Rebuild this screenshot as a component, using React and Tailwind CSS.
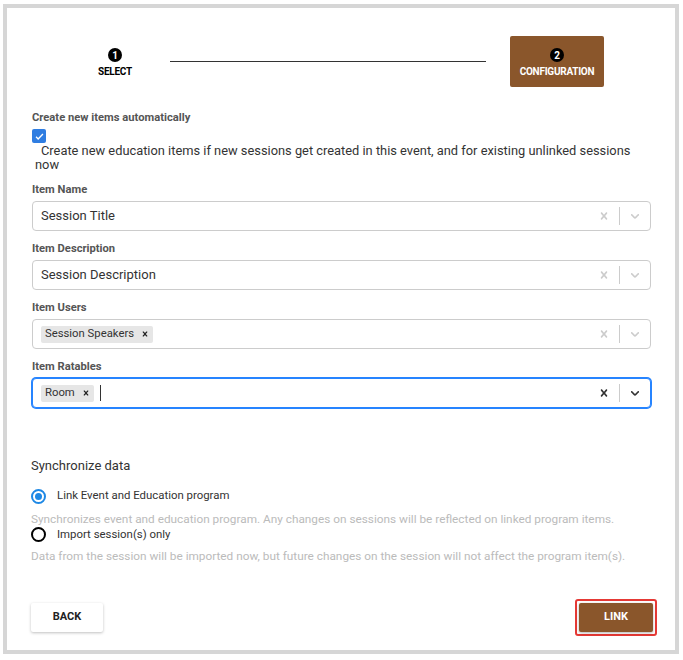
import React, { useState } from "react";

const font = { fontFamily: "Roboto, 'Liberation Sans', sans-serif" };

function ClearIcon({ dark }) {
  return (
    <svg width="14" height="14" viewBox="0 0 20 20" className={dark ? "fill-[#333]" : "fill-[#ccc]"}>
      <path d="M14.348 14.849c-0.469 0.469-1.229 0.469-1.697 0l-2.651-3.030-2.651 3.029c-0.469 0.469-1.229 0.469-1.697 0-0.469-0.469-0.469-1.229 0-1.697l2.758-3.15-2.759-3.152c-0.469-0.469-0.469-1.228 0-1.697s1.228-0.469 1.697 0l2.652 3.031 2.651-3.031c0.469-0.469 1.228-0.469 1.697 0s0.469 1.229 0 1.697l-2.758 3.152 2.758 3.15c0.469 0.469 0.469 1.229 0 1.698z" />
    </svg>
  );
}

function ChevronIcon({ dark }) {
  return (
    <svg width="14" height="14" viewBox="0 0 20 20" className={dark ? "fill-[#333]" : "fill-[#ccc]"}>
      <path d="M4.516 7.548c0.436-0.446 1.043-0.481 1.576 0l3.908 3.747 3.908-3.747c0.533-0.481 1.141-0.446 1.574 0 0.436 0.445 0.408 1.197 0 1.615-0.406 0.418-4.695 4.502-4.695 4.502-0.217 0.223-0.502 0.335-0.787 0.335s-0.57-0.112-0.789-0.335c0 0-4.287-4.084-4.695-4.502s-0.436-1.17 0-1.615z" />
    </svg>
  );
}

function Chip({ label }) {
  return (
    <div className="flex items-center h-[17px] bg-[#e6e6e6] rounded-[2px] pl-[4px] pr-[3px] text-[11.3px] text-[#333]">
      <span>{label}</span>
      <span className="ml-[6px] flex items-center">
        <svg width="10" height="10" viewBox="0 0 20 20" className="fill-[#222]">
          <path d="M14.348 14.849c-0.469 0.469-1.229 0.469-1.697 0l-2.651-3.030-2.651 3.029c-0.469 0.469-1.229 0.469-1.697 0-0.469-0.469-0.469-1.229 0-1.697l2.758-3.15-2.759-3.152c-0.469-0.469-0.469-1.228 0-1.697s1.228-0.469 1.697 0l2.652 3.031 2.651-3.031c0.469-0.469 1.228-0.469 1.697 0s0.469 1.229 0 1.697l-2.758 3.152 2.758 3.15c0.469 0.469 0.469 1.229 0 1.698z" />
        </svg>
      </span>
    </div>
  );
}

function SelectField({ label, value, chips, focused }) {
  return (
    <div className="mt-[11px]">
      <div className="text-[11.2px] font-bold text-[#555] leading-[13px]">{label}</div>
      <div
        className={`mt-[5px] h-[30px] rounded-[4px] bg-white flex items-center ${
          focused
            ? "border border-[#2684ff] shadow-[0_0_0_1px_#2684ff]"
            : "border border-[#ccc]"
        }`}
      >
        <div className="flex-1 flex items-center gap-[4px] pl-[8px]">
          {value && <span className="text-[13px] text-[#333]">{value}</span>}
          {chips &&
            chips.map((c) => <Chip key={c} label={c} />)}
          {focused && <span className="ml-[2px] w-px h-[16px] bg-[#333]" />}
        </div>
        <div className="flex items-center pr-[8px]">
          <ClearIcon dark={focused} />
          <span className="mx-[8px] w-px h-[18px] bg-[#ccc]" />
          <ChevronIcon dark={focused} />
        </div>
      </div>
    </div>
  );
}

export default function App() {
  const [sync, setSync] = useState("link");
  const [auto, setAuto] = useState(true);

  return (
    <div className="pt-[4px] pl-[3px] bg-white" style={font}>
      <div className="w-[676px] h-[650px] border-4 border-[#d6d6d6] bg-white pl-[25px] pr-[24px] text-[#333]">
        {/* stepper */}
        <div className="flex items-center mt-[28px]">
          <div className="ml-[36px] w-[94px] h-[51px] flex flex-col items-center pt-[12px]">
            <span className="w-[14px] h-[14px] rounded-full bg-black text-white text-[10px] font-bold flex items-center justify-center">1</span>
            <span className="mt-[4px] text-[10px] leading-[12px] font-bold text-black tracking-tight">SELECT</span>
          </div>
          <div className="ml-[8px] w-[316px] h-px bg-[#333]" />
          <div className="ml-[24px] w-[94px] h-[51px] bg-[#8a562b] rounded-[2px] flex flex-col items-center pt-[12px]">
            <span className="w-[14px] h-[14px] rounded-full bg-black text-white text-[10px] font-bold flex items-center justify-center">2</span>
            <span className="mt-[4px] text-[10px] leading-[12px] font-bold text-white tracking-tight">CONFIGURATION</span>
          </div>
        </div>

        {/* auto create */}
        <div className="mt-[24px] text-[11.2px] font-bold text-[#555] leading-[13px]">
          Create new items automatically
        </div>
        <button
          onClick={() => setAuto(!auto)}
          className={`mt-[5px] w-[14px] h-[14px] rounded-[2px] flex items-center justify-center ${
            auto ? "bg-[#2f7de1]" : "border border-[#767676] bg-white"
          }`}
        >
          {auto && (
            <svg width="11" height="11" viewBox="0 0 16 16" fill="none" stroke="white" strokeWidth="2">
              <path d="M3 8.5l3 3 7-7" />
            </svg>
          )}
        </button>
        <p className="mt-[1px] pl-[3px] indent-[6px] text-[12.85px] leading-[14px] text-[#333]">
          Create new education items if new sessions get created in this event, and for existing unlinked sessions now
        </p>

        <SelectField label="Item Name" value="Session Title" />
        <SelectField label="Item Description" value="Session Description" />
        <SelectField label="Item Users" chips={["Session Speakers"]} />
        <SelectField label="Item Ratables" chips={["Room"]} focused />

        {/* sync */}
        <div className="mt-[50px] -ml-px text-[13px] text-[#333] leading-[16px]">Synchronize data</div>
        <div className="mt-[14px] -ml-px">
          <label className="flex items-center h-[16px] cursor-pointer" onClick={() => setSync("link")}>
            <span
              className={`w-[15px] h-[15px] rounded-full border-2 flex items-center justify-center ${
                sync === "link" ? "border-[#1e88e5]" : "border-black"
              }`}
            >
              {sync === "link" && <span className="w-[7px] h-[7px] rounded-full bg-[#1e88e5]" />}
            </span>
            <span className="ml-[11px] text-[11.4px] text-[#333]">Link Event and Education program</span>
          </label>
          <div className="mt-[9px] text-[11.8px] leading-[13px] text-[#bbb]">
            Synchronizes event and education program. Any changes on sessions will be reflected on linked program items.
          </div>
          <label className="mt-[1px] flex items-center h-[15px] cursor-pointer" onClick={() => setSync("import")}>
            <span
              className={`w-[15px] h-[15px] rounded-full border-2 flex items-center justify-center ${
                sync === "import" ? "border-[#1e88e5]" : "border-black"
              }`}
            >
              {sync === "import" && <span className="w-[7px] h-[7px] rounded-full bg-[#1e88e5]" />}
            </span>
            <span className="ml-[11px] text-[11.4px] text-[#333]">Import session(s) only</span>
          </label>
          <div className="mt-[8px] text-[11.8px] leading-[13px] text-[#bbb]">
            Data from the session will be imported now, but future changes on the session will not affect the program item(s).
          </div>
        </div>

        {/* actions */}
        <div className="mt-[36px] -ml-px flex items-center justify-between">
          <button className="w-[72px] h-[29px] bg-white rounded-[2px] shadow-[0_1px_3px_rgba(0,0,0,0.25)] text-[11px] font-bold text-[#222]">
            BACK
          </button>
          <div className="-mr-[6px] border-2 border-[#e53935] rounded-[3px] p-[2px]">
            <button className="w-[74px] h-[29px] bg-[#8a562b] rounded-[2px] shadow-[0_1px_3px_rgba(0,0,0,0.3)] text-[11px] font-bold text-white">
              LINK
            </button>
          </div>
        </div>
      </div>
    </div>
  );
}
